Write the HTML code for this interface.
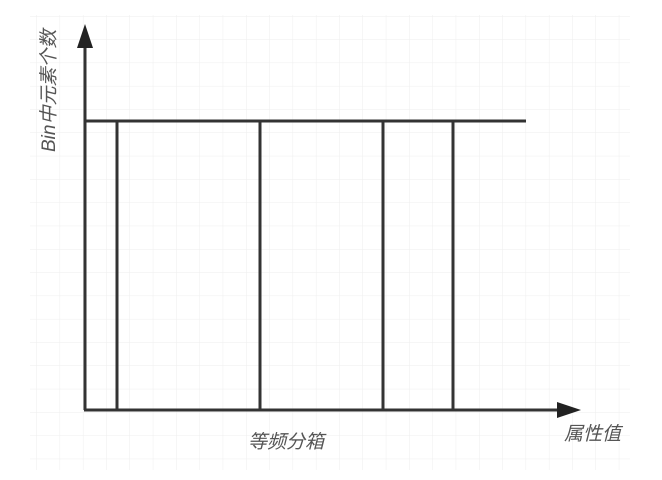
<!DOCTYPE html>
<html><head><meta charset="utf-8"><style>
html,body{margin:0;padding:0;background:#fff;}
svg{display:block}
text{font-family:"Liberation Sans","Noto Sans CJK SC",sans-serif;font-style:italic;fill:#555;}
</style></head><body>
<svg width="662" height="480" viewBox="0 0 662 480" xmlns="http://www.w3.org/2000/svg">
<defs>
<pattern id="g" x="13" y="16" width="23.3" height="23.3" patternUnits="userSpaceOnUse">
<path d="M0 0V23.3M0 0H23.3" stroke="#eeeeee" stroke-width="1" fill="none"/>
</pattern>
</defs>
<rect x="30" y="15" width="600" height="455" fill="url(#g)"/>
<g stroke="#333" stroke-width="3" fill="none">
<line x1="85" y1="40" x2="85" y2="410"/>
<line x1="84" y1="410" x2="565" y2="410"/>
<line x1="85" y1="121" x2="526" y2="121"/>
<line x1="117" y1="121" x2="117" y2="410"/>
<line x1="260" y1="121" x2="260" y2="410"/>
<line x1="383" y1="121" x2="383" y2="410"/>
<line x1="453" y1="121" x2="453" y2="410"/>
</g>
<polygon points="85,24 77,48 93,48" fill="#222"/>
<polygon points="581,410 557,402 557,418" fill="#222"/>
<text transform="translate(55,152) rotate(-90)" font-size="19">Bin中元素个数</text>
<text x="248" y="448" font-size="19">等频分箱</text>
<text x="564" y="440" font-size="19">属性值</text>
</svg>
</body></html>
